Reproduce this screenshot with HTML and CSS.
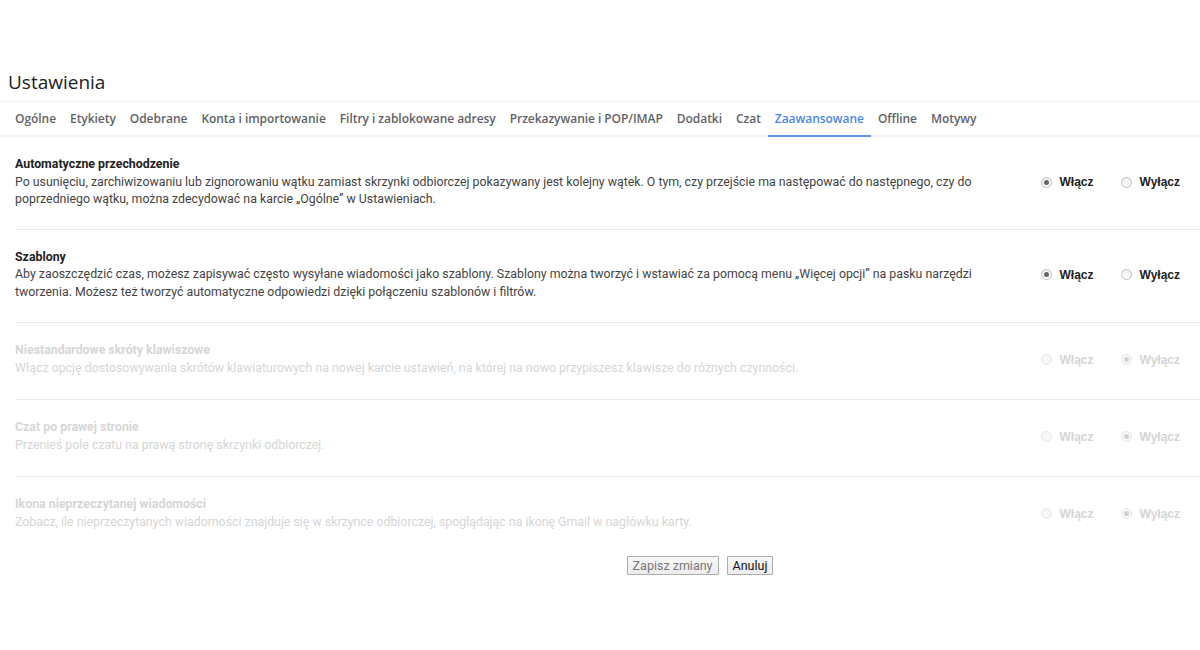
FILE: index.html
```html
<!DOCTYPE html>
<html lang="pl">
<head>
  <meta charset="UTF-8" />
  <title>Ustawienia</title>
  <link rel="stylesheet" href="styles.css">
</head>
<body>
  <div class="page">
    <h1 class="title">Ustawienia</h1>
    <div class="tabs">
      <div class="tab">Ogólne</div>
      <div class="tab">Etykiety</div>
      <div class="tab">Odebrane</div>
      <div class="tab">Konta i importowanie</div>
      <div class="tab">Filtry i zablokowane adresy</div>
      <div class="tab">Przekazywanie i POP/IMAP</div>
      <div class="tab">Dodatki</div>
      <div class="tab">Czat</div>
      <div class="tab active">Zaawansowane</div>
      <div class="tab">Offline</div>
      <div class="tab">Motywy</div>
    </div>

    <div class="settings">
      <div class="setting">
        <div class="desc">
          <div class="name">Automatyczne przechodzenie</div>
          Po usunięciu, zarchiwizowaniu lub zignorowaniu wątku zamiast skrzynki odbiorczej pokazywany jest kolejny wątek. O tym, czy przejście ma następować do następnego, czy do poprzedniego wątku, można zdecydować na karcie „Ogólne” w Ustawieniach.
        </div>
        <div class="choices">
          <label class="choice"><span class="radio on"></span>Włącz</label>
          <label class="choice"><span class="radio"></span>Wyłącz</label>
        </div>
      </div>

      <div class="setting">
        <div class="desc">
          <div class="name">Szablony</div>
          Aby zaoszczędzić czas, możesz zapisywać często wysyłane wiadomości jako szablony. Szablony można tworzyć i wstawiać za pomocą menu „Więcej opcji” na pasku narzędzi tworzenia. Możesz też tworzyć automatyczne odpowiedzi dzięki połączeniu szablonów i filtrów.
        </div>
        <div class="choices">
          <label class="choice"><span class="radio on"></span>Włącz</label>
          <label class="choice"><span class="radio"></span>Wyłącz</label>
        </div>
      </div>

      <div class="setting disabled">
        <div class="desc">
          <div class="name">Niestandardowe skróty klawiszowe</div>
          Włącz opcję dostosowywania skrótów klawiaturowych na nowej karcie ustawień, na której na nowo przypiszesz klawisze do różnych czynności.
        </div>
        <div class="choices">
          <label class="choice"><span class="radio"></span>Włącz</label>
          <label class="choice"><span class="radio on"></span>Wyłącz</label>
        </div>
      </div>

      <div class="setting disabled">
        <div class="desc">
          <div class="name">Czat po prawej stronie</div>
          Przenieś pole czatu na prawą stronę skrzynki odbiorczej.
        </div>
        <div class="choices">
          <label class="choice"><span class="radio"></span>Włącz</label>
          <label class="choice"><span class="radio on"></span>Wyłącz</label>
        </div>
      </div>

      <div class="setting disabled last">
        <div class="desc">
          <div class="name">Ikona nieprzeczytanej wiadomości</div>
          Zobacz, ile nieprzeczytanych wiadomości znajduje się w skrzynce odbiorczej, spoglądając na ikonę Gmail w nagłówku karty.
        </div>
        <div class="choices">
          <label class="choice"><span class="radio"></span>Włącz</label>
          <label class="choice"><span class="radio on"></span>Wyłącz</label>
        </div>
      </div>
    </div>

    <div class="buttons">
      <button class="btn dim">Zapisz zmiany</button>
      <button class="btn">Anuluj</button>
    </div>
  </div>
</body>
</html>
```

FILE: styles.css
```css
body {
  margin: 0;
  background: #fff;
  font-family: Roboto, "Liberation Sans", sans-serif;
}
.page {
  padding-top: 64px;
}
.title {
  margin: 0 0 0 8px;
  font-family: "Open Sans", sans-serif;
  font-weight: normal;
  font-size: 19px;
  line-height: 37px;
  color: #202124;
}
.tabs {
  display: flex;
  padding-left: 8px;
  border-top: 1px solid #eef0f0;
  border-bottom: 2px solid #f1f3f4;
  height: 33px;
}
.tab {
  padding: 0 7px;
  font-family: "Open Sans", sans-serif;
  font-size: 12px;
  font-weight: 600;
  letter-spacing: -0.05px;
  line-height: 33px;
  color: #5f6368;
  border-bottom: 2px solid transparent;
  margin-bottom: -2px;
}
.tab.active {
  color: #4a86e8;
  border-bottom-color: #5c94ee;
}
.settings {
  padding-left: 15px;
}
.setting {
  display: flex;
  align-items: center;
  padding: 19px 20px 21px 0;
  border-bottom: 1px solid #e8e8e8;
}
.setting:first-child {
  padding-bottom: 20px;
}
.setting.disabled {
  padding-bottom: 22px;
}
.setting.last {
  border-bottom: none;
}
.desc {
  width: 975px;
  font-size: 12.35px;
  line-height: 17.5px;
  color: #444;
}
.name {
  font-weight: bold;
  color: #222;
}
.disabled .desc,
.disabled .name {
  color: #d6d6d6;
}
.choices {
  margin-left: auto;
  display: flex;
  gap: 27px;
}
.choice {
  display: flex;
  align-items: center;
  gap: 8px;
  font-family: "Liberation Sans", Arial, sans-serif;
  font-size: 12px;
  font-weight: bold;
  color: #222;
}
.disabled .choice {
  color: #d5d5d5;
}
.radio {
  width: 9px;
  height: 9px;
  border: 1px solid #bdbdbd;
  border-radius: 50%;
  background: linear-gradient(#f0f0f0, #fcfcfc);
  display: flex;
  align-items: center;
  justify-content: center;
}
.radio.on::after {
  content: "";
  width: 5px;
  height: 5px;
  border-radius: 50%;
  background: #666;
}
.disabled .radio {
  border-color: #e6e6e6;
  background: #f7f7f7;
}
.disabled .radio.on::after {
  background: #d0d0d0;
}
.buttons {
  display: flex;
  justify-content: center;
  gap: 8px;
  padding-left: 200px;
  margin-top: 3px;
}
.btn {
  font-family: Roboto, "Liberation Sans", sans-serif;
  font-size: 12.5px;
  height: 19px;
  padding: 0 5px;
  border: 1px solid #adadad;
  border-radius: 1px;
  background: linear-gradient(#f8f8f8, #ececec);
  color: #111;
  line-height: 17px;
}
.btn.dim {
  color: #777;
}
```
